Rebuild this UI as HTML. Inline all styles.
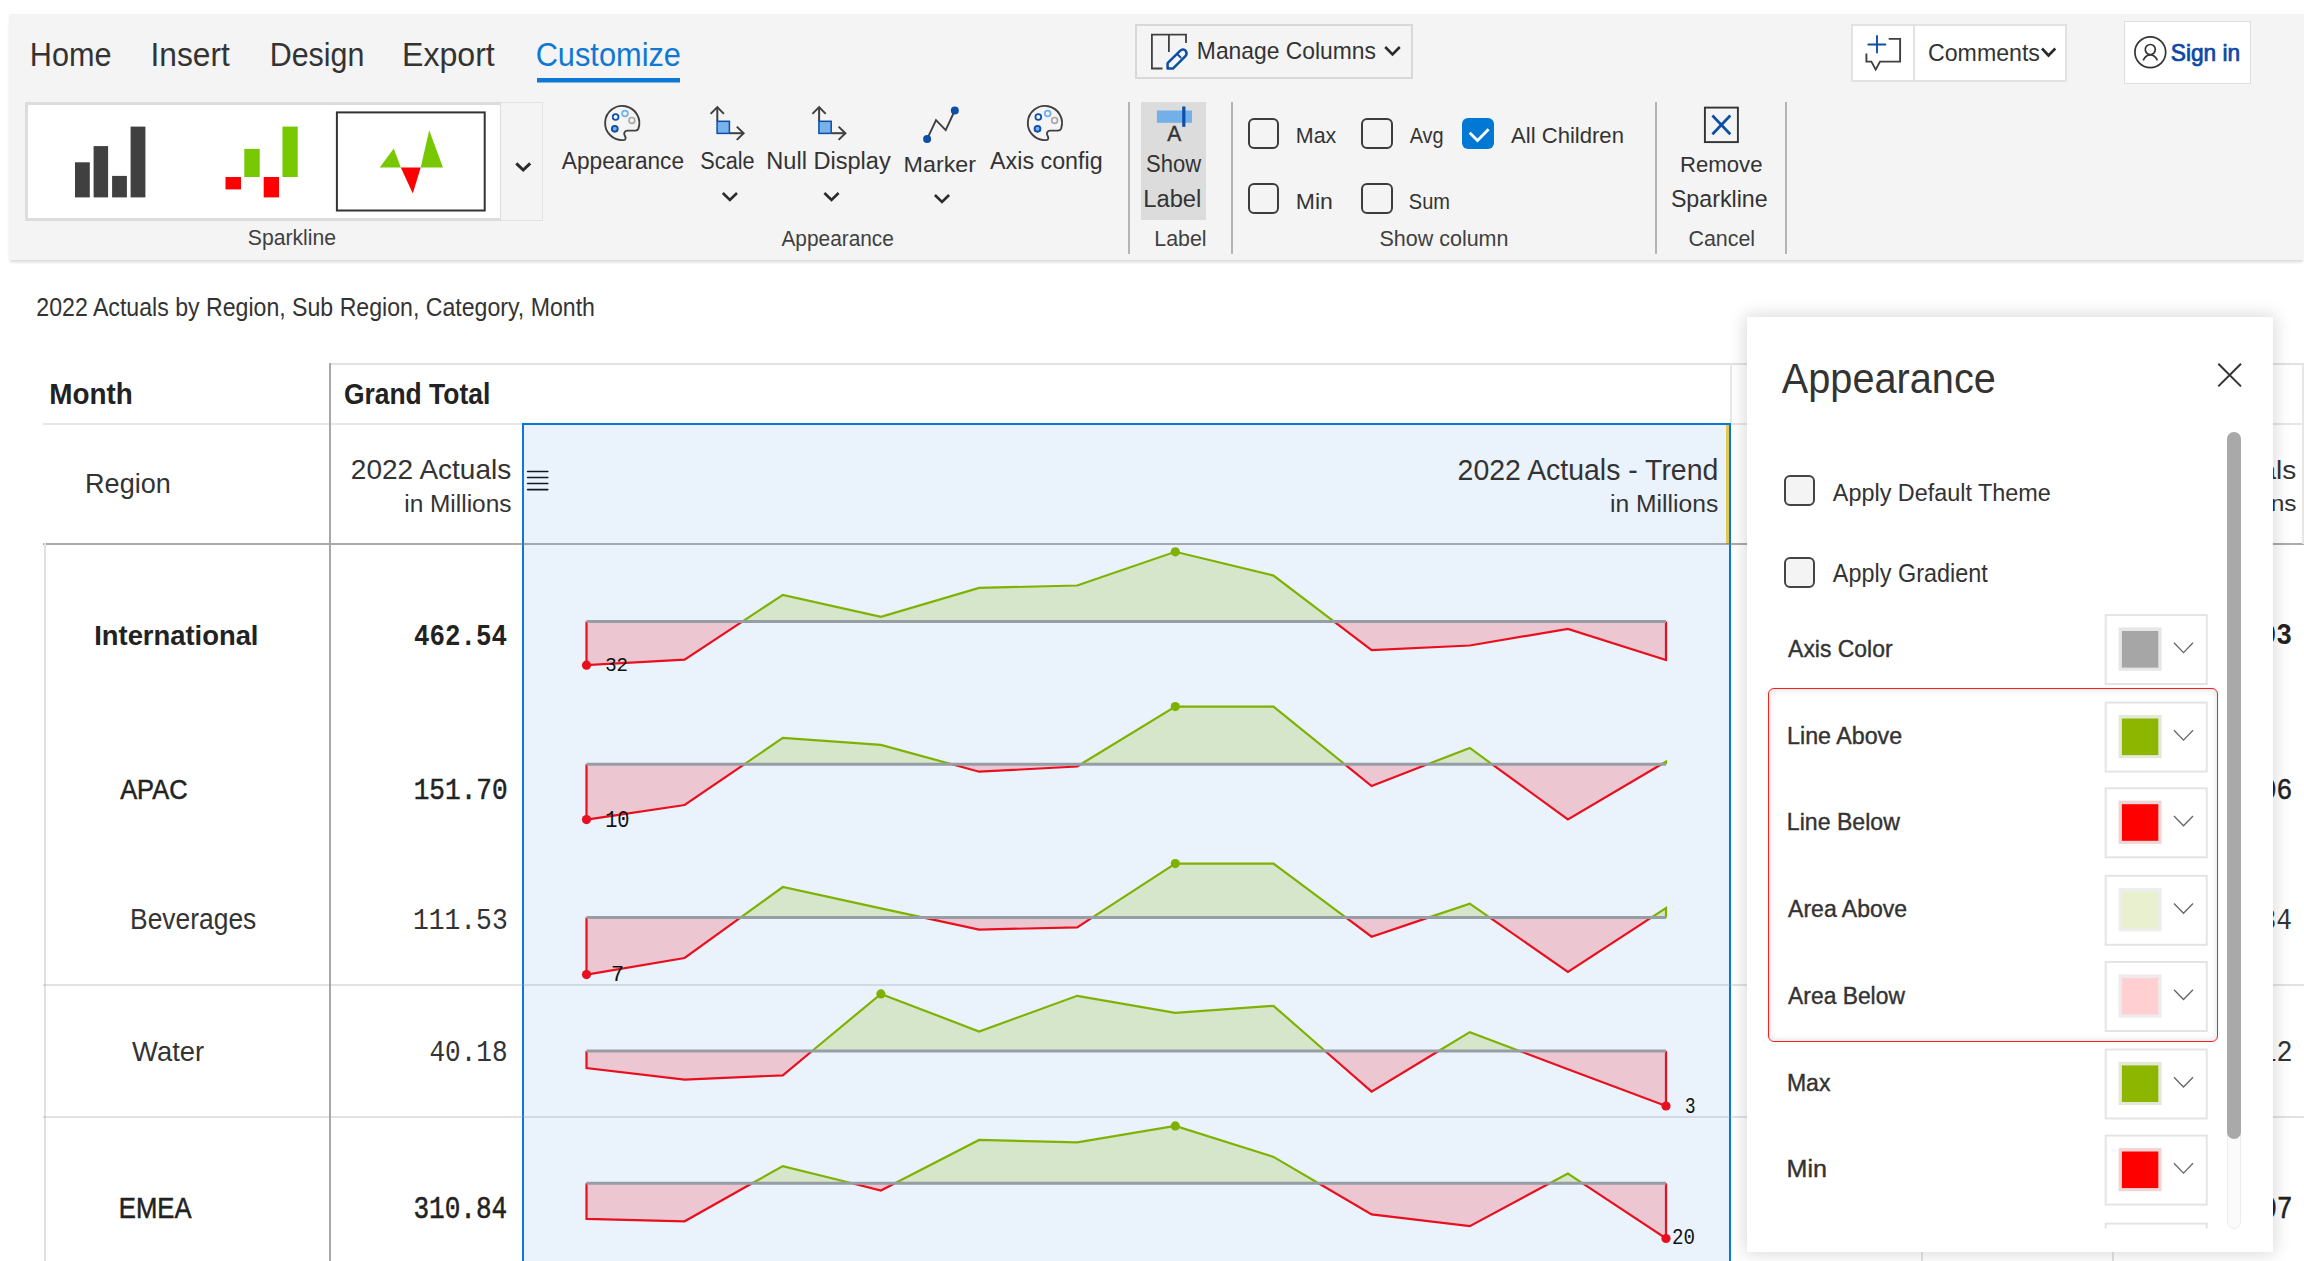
<!DOCTYPE html>
<html><head><meta charset="utf-8">
<style>
html,body{margin:0;padding:0;background:#fff;}
body{width:2304px;height:1261px;position:relative;overflow:hidden;font-family:"Liberation Sans",sans-serif;}
.a{position:absolute;box-sizing:border-box;}
svg.full{position:absolute;left:0;top:0;width:2304px;height:1261px;overflow:visible;}
</style></head><body>
<!-- ribbon -->
<div class="a" style="left:9px;top:14px;width:2295px;height:246px;background:#f4f4f4;box-shadow:0 3px 3px -1px rgba(0,0,0,0.16);"></div>
<!-- gallery -->
<div class="a" style="left:25px;top:102px;width:478px;height:119px;background:#fff;border:3px solid #dcdcdc;"></div>
<div class="a" style="left:501px;top:102px;width:42px;height:119px;background:#f4f4f4;border:1px solid #e2e2e2;border-left:none;"></div>
<!-- show label highlight -->
<div class="a" style="left:1141px;top:102px;width:65px;height:118px;background:#dcdcdc;"></div>
<!-- top buttons -->
<div class="a" style="left:1135px;top:24px;width:278px;height:55px;border:2px solid #d8d8d8;"></div>
<div class="a" style="left:1851px;top:24px;width:216px;height:58px;background:#fff;border:2px solid #e2e2e2;"></div>
<div class="a" style="left:1912.5px;top:25px;width:2px;height:56px;background:#e2e2e2;"></div>
<div class="a" style="left:2124px;top:21px;width:126.5px;height:63px;background:#fff;border:1.5px solid #dedede;"></div>
<!-- separators -->
<div class="a" style="left:1128px;top:102px;width:2px;height:152px;background:#b4b4b4;"></div>
<div class="a" style="left:1230.5px;top:102px;width:2px;height:152px;background:#b4b4b4;"></div>
<div class="a" style="left:1654.5px;top:102px;width:2px;height:152px;background:#b4b4b4;"></div>
<div class="a" style="left:1785px;top:102px;width:2px;height:152px;background:#b4b4b4;"></div>
<!-- checkboxes -->
<div class="a" style="left:1248px;top:118.4px;width:31.4px;height:30.6px;border:2px solid #3c3c3c;border-radius:6px;"></div>
<div class="a" style="left:1361.4px;top:118.4px;width:31.4px;height:30.6px;border:2px solid #3c3c3c;border-radius:6px;"></div>
<div class="a" style="left:1248px;top:183.3px;width:31.4px;height:31.2px;border:2px solid #3c3c3c;border-radius:6px;"></div>
<div class="a" style="left:1361.4px;top:183.3px;width:31.4px;height:31.2px;border:2px solid #3c3c3c;border-radius:6px;"></div>
<div class="a" style="left:1461.5px;top:117.8px;width:32px;height:31.7px;background:#0078d4;border-radius:6px;"></div>

<svg class="full">
<!-- tab underline -->
<rect x="537" y="78" width="143" height="4.5" fill="#0f78d4"/>
<!-- gallery icons -->
<g fill="#404040"><rect x="75" y="162.3" width="14.8" height="35.1"/><rect x="93.6" y="146.1" width="14.5" height="51.3"/><rect x="112.1" y="175.9" width="14.8" height="21.5"/><rect x="130.6" y="126.6" width="14.8" height="70.8"/></g>
<g><rect x="225.5" y="177" width="15.5" height="12.4" fill="#ff0000"/><rect x="244.3" y="148.9" width="15.4" height="28.1" fill="#77c800"/><rect x="263.7" y="177" width="15.3" height="20.4" fill="#ff0000"/><rect x="282.5" y="126.6" width="15.2" height="50.4" fill="#77c800"/></g>
<rect x="336.9" y="112.4" width="147.8" height="98.1" fill="none" stroke="#333" stroke-width="2"/>
<polygon points="379.7,167.6 393.8,148.4 400.8,167.6" fill="#77c800"/>
<polygon points="400.8,167.6 420.7,167.6 412.8,193.4" fill="#ff0000"/>
<polygon points="420.7,167.6 429.2,130.2 443,167.6" fill="#77c800"/>
<polyline points="516.3,163.3 523.2,170 530.2,163.3" fill="none" stroke="#2b2b2b" stroke-width="3"/>
<!-- palette icons -->
<g id="pal">
<path d="M623.6,140.1 A17.1 17.1 0 1 1 638.4,128.6 Q637.6,130.6 635.2,130.6 L627.5,130.6 C624.6,130.6 623.3,133.6 624.8,135.6 C626.2,137.6 625.8,140.1 623.6,140.1 Z" fill="none" stroke="#404040" stroke-width="1.9" stroke-linejoin="round"/>
<circle cx="615.6" cy="117" r="2.9" fill="none" stroke="#0d4ea6" stroke-width="1.7"/>
<circle cx="625" cy="113.5" r="2.9" fill="none" stroke="#6fb0ee" stroke-width="1.7"/>
<circle cx="631.9" cy="120.4" r="2.9" fill="none" stroke="#a8a8a8" stroke-width="1.7"/>
<circle cx="614.8" cy="128.8" r="2.9" fill="#74b3ee" stroke="#0d4ea6" stroke-width="1.9"/>
</g>
<use href="#pal" x="422.7" y="0"/>
<!-- scale icon -->
<g id="scl" fill="none" stroke="#404040" stroke-width="2">
<polyline points="710.6,113.9 717.3,107.1 723.9,113.9"/><line x1="717.3" y1="107.5" x2="717.3" y2="121"/>
<polyline points="736.8,126.6 743.6,133.2 736.8,139.9"/><line x1="730" y1="133.2" x2="743" y2="133.2"/>
<rect x="717.1" y="121.3" width="12.3" height="12.1" fill="#78b2ea" stroke="#0d4ea6" stroke-width="1.5"/>
</g>
<use href="#scl" x="101.8" y="0"/>
<!-- chevrons under buttons -->
<g fill="none" stroke="#2b2b2b" stroke-width="2.6">
<polyline points="722.8,193 729.9,200 737,193"/>
<polyline points="824.4,193 831.5,200 838.6,193"/>
<polyline points="934.9,195 942,202 949.1,195"/>
<polyline points="1385.2,47 1392.5,54.3 1399.8,47"/>
<polyline points="2042,48.5 2048.5,55.5 2055.3,48.5"/>
</g>
<!-- marker icon -->
<polyline points="927.1,139.1 936,120.2 945.7,130.1 954.8,110.5" fill="none" stroke="#404040" stroke-width="1.9"/>
<circle cx="927.1" cy="139.1" r="4" fill="#0d4ea6"/><circle cx="954.8" cy="110.5" r="4" fill="#0d4ea6"/>
<!-- show label icon -->
<rect x="1156.9" y="110.5" width="35.1" height="12.3" fill="#74b0e8"/>
<rect x="1182.2" y="106.5" width="3.2" height="20.3" fill="#0d4ea6"/>
<text transform="translate(1167.3,141.3) scale(0.93,1)" font-family="Liberation Sans" font-size="22.6" fill="#333" stroke="#333" stroke-width="0.4">A</text>
<!-- remove icon -->
<rect x="1704.9" y="107.6" width="33" height="34.5" fill="none" stroke="#333" stroke-width="1.9"/>
<g stroke="#0d4ea6" stroke-width="2.7"><line x1="1712.4" y1="115.5" x2="1730.3" y2="134.3"/><line x1="1730.3" y1="115.5" x2="1712.4" y2="134.3"/></g>
<!-- checkmark -->
<polyline points="1469.7,132.8 1477.5,140.6 1488.6,129.2" fill="none" stroke="#fff" stroke-width="2.8"/>
<!-- manage columns icon -->
<polyline points="1162.5,68.5 1151.9,68.5 1151.9,34.7 1186,34.7 1186,43" fill="none" stroke="#404040" stroke-width="1.8"/>
<line x1="1168.9" y1="34.7" x2="1168.9" y2="52" stroke="#404040" stroke-width="1.8"/>
<path d="M1167.6,68.6 L1167.6,63.2 L1180,50.8 C1182,48.8 1184.8,49 1186,51.3 C1187,53.3 1186.6,55 1185.2,56.4 L1172.9,68.6 Z" fill="none" stroke="#0d4ea6" stroke-width="2.5" stroke-linejoin="round"/>
<line x1="1177.2" y1="54" x2="1181.2" y2="58" stroke="#0d4ea6" stroke-width="1.8"/>
<!-- comments icon -->
<g fill="none" stroke="#0d4ea6" stroke-width="1.9" stroke-linecap="round"><line x1="1877" y1="36" x2="1877" y2="52.6"/><line x1="1868.3" y1="44.5" x2="1885.4" y2="44.5"/></g>
<polyline points="1866.4,53.4 1866.4,61.6 1871.4,61.6 1875.7,69.6 1880,61.6 1900.1,61.6 1900.1,38.9 1888.7,38.9" fill="none" stroke="#404040" stroke-width="1.9"/>
<!-- sign in icon -->
<g fill="none" stroke="#333" stroke-width="1.7"><circle cx="2150.3" cy="52.3" r="15.4"/><circle cx="2150.3" cy="49.5" r="5"/><path d="M2143.2,60.3 C2145,56.5 2147.5,54.8 2150.3,54.8 C2153.1,54.8 2155.6,56.5 2157.4,60.3"/></g>
<text transform="translate(29.79,65.70) scale(0.9005,1)" font-family="Liberation Sans" font-size="34.01" font-weight="400" fill="#333333">Home</text>
<text transform="translate(150.52,65.70) scale(0.9405,1)" font-family="Liberation Sans" font-size="33.72" font-weight="400" fill="#333333">Insert</text>
<text transform="translate(269.72,65.70) scale(0.9018,1)" font-family="Liberation Sans" font-size="33.72" font-weight="400" fill="#333333">Design</text>
<text transform="translate(402.01,65.70) scale(0.9522,1)" font-family="Liberation Sans" font-size="33.72" font-weight="400" fill="#333333">Export</text>
<text transform="translate(535.64,65.70) scale(0.9131,1)" font-family="Liberation Sans" font-size="33.72" font-weight="400" fill="#0f78d4">Customize</text>
<text transform="translate(1196.85,58.60) scale(0.9587,1)" font-family="Liberation Sans" font-size="23.84" font-weight="400" fill="#333333">Manage Columns</text>
<text transform="translate(1928.02,60.60) scale(0.9599,1)" font-family="Liberation Sans" font-size="24.13" font-weight="400" fill="#333333">Comments</text>
<text transform="translate(2170.79,60.83) scale(0.9727,1)" font-family="Liberation Sans" font-size="23.33" font-weight="400" fill="#0b48a8" stroke="#0b48a8" stroke-width="0.75">Sign in</text>
<text transform="translate(561.84,168.70) scale(0.9572,1)" font-family="Liberation Sans" font-size="23.69" font-weight="400" fill="#333333">Appearance</text>
<text transform="translate(700.33,168.70) scale(0.9170,1)" font-family="Liberation Sans" font-size="23.69" font-weight="400" fill="#333333">Scale</text>
<text transform="translate(766.27,168.70) scale(0.9964,1)" font-family="Liberation Sans" font-size="23.69" font-weight="400" fill="#333333">Null Display</text>
<text transform="translate(903.60,172.20) scale(1.0472,1)" font-family="Liberation Sans" font-size="22.24" font-weight="400" fill="#333333">Marker</text>
<text transform="translate(990.09,168.70) scale(0.9830,1)" font-family="Liberation Sans" font-size="23.69" font-weight="400" fill="#333333">Axis config</text>
<text transform="translate(1145.98,172.30) scale(0.9318,1)" font-family="Liberation Sans" font-size="23.69" font-weight="400" fill="#333333">Show</text>
<text transform="translate(1143.25,207.20) scale(0.9667,1)" font-family="Liberation Sans" font-size="24.56" font-weight="400" fill="#333333">Label</text>
<text transform="translate(1295.79,143.40) scale(0.9961,1)" font-family="Liberation Sans" font-size="21.51" font-weight="400" fill="#333333">Max</text>
<text transform="translate(1409.64,143.40) scale(0.9266,1)" font-family="Liberation Sans" font-size="21.51" font-weight="400" fill="#333333">Avg</text>
<text transform="translate(1511.09,143.40) scale(1.0266,1)" font-family="Liberation Sans" font-size="21.51" font-weight="400" fill="#333333">All Children</text>
<text transform="translate(1295.72,209.00) scale(1.0487,1)" font-family="Liberation Sans" font-size="21.95" font-weight="400" fill="#333333">Min</text>
<text transform="translate(1408.84,209.00) scale(0.9142,1)" font-family="Liberation Sans" font-size="21.95" font-weight="400" fill="#333333">Sum</text>
<text transform="translate(1680.06,171.90) scale(0.9726,1)" font-family="Liberation Sans" font-size="22.75" font-weight="400" fill="#333333">Remove</text>
<text transform="translate(1670.88,206.70) scale(0.9743,1)" font-family="Liberation Sans" font-size="23.84" font-weight="400" fill="#333333">Sparkline</text>
<text transform="translate(247.76,245.40) scale(0.9789,1)" font-family="Liberation Sans" font-size="21.66" font-weight="400" fill="#404040">Sparkline</text>
<text transform="translate(781.45,245.90) scale(0.9382,1)" font-family="Liberation Sans" font-size="22.24" font-weight="400" fill="#404040">Appearance</text>
<text transform="translate(1154.23,245.80) scale(0.9443,1)" font-family="Liberation Sans" font-size="22.67" font-weight="400" fill="#404040">Label</text>
<text transform="translate(1379.45,245.80) scale(0.9489,1)" font-family="Liberation Sans" font-size="22.67" font-weight="400" fill="#404040">Show column</text>
<text transform="translate(1688.44,245.80) scale(0.9456,1)" font-family="Liberation Sans" font-size="22.67" font-weight="400" fill="#404040">Cancel</text>
</svg>

<!-- table -->
<div class="a" style="left:329px;top:363px;width:1975px;height:2px;background:#e2e2e2;"></div>
<div class="a" style="left:43px;top:422.5px;width:2261px;height:2px;background:#e6e6e6;"></div>
<div class="a" style="left:1729.5px;top:363px;width:2px;height:60px;background:#e8e8e8;"></div>
<div class="a" style="left:522px;top:423px;width:1209px;height:840px;background:#eaf2fc;border:2.5px solid #0a78d7;border-bottom:none;"></div>
<div class="a" style="left:1725.5px;top:424.5px;width:3.5px;height:119px;background:#e2c850;"></div>
<div class="a" style="left:43px;top:542.8px;width:2261px;height:2px;background:rgba(120,120,125,0.62);"></div>
<div class="a" style="left:328.5px;top:363px;width:2px;height:898px;background:#a8a8a8;"></div>
<div class="a" style="left:43.5px;top:543px;width:2px;height:718px;background:#e0e0e0;"></div>
<div class="a" style="left:43px;top:984.3px;width:2261px;height:2px;background:rgba(150,150,160,0.28);"></div>
<div class="a" style="left:43px;top:1116.3px;width:2261px;height:2px;background:rgba(150,150,160,0.28);"></div>
<div class="a" style="left:2301.5px;top:363px;width:2px;height:181px;background:#e6e6e6;"></div>
<div class="a" style="left:1921px;top:544px;width:2px;height:717px;background:#e2e2e2;"></div>
<div class="a" style="left:2112px;top:544px;width:2px;height:717px;background:#e2e2e2;"></div>
<svg class="full">
<g stroke="#101820" stroke-width="1.6" stroke-linecap="round"><line x1="527.6" y1="471.5" x2="547.8" y2="471.5"/><line x1="527.6" y1="477.5" x2="547.8" y2="477.5"/><line x1="527.6" y1="483.5" x2="547.8" y2="483.5"/><line x1="527.6" y1="489.6" x2="547.8" y2="489.6"/></g>
<polygon points="586.5,621.4 586.5,621.4 684.6,621.4 742.6,621.4 782.8,594.9 880.9,616.8 979.1,587.9 1077.2,585.5 1175.3,551.8 1273.5,575.6 1333.8,621.4 1371.6,621.4 1469.8,621.4 1567.9,621.4 1666.0,621.4 1666.0,621.4" fill="#d6e6cb"/>
<polygon points="586.5,621.4 586.5,665.2 684.6,659.6 742.6,621.4 782.8,621.4 880.9,621.4 979.1,621.4 1077.2,621.4 1175.3,621.4 1273.5,621.4 1333.8,621.4 1371.6,650.1 1469.8,645.5 1567.9,628.9 1666.0,660.1 1666.0,621.4" fill="#ecc7d1"/>
<polyline points="586.5,621.4 586.5,665.2 684.6,659.6 742.6,621.4" fill="none" stroke="#e8101e" stroke-width="2.2" stroke-linejoin="miter"/>
<polyline points="742.6,621.4 782.8,594.9 880.9,616.8 979.1,587.9 1077.2,585.5 1175.3,551.8 1273.5,575.6 1333.8,621.4" fill="none" stroke="#7fb200" stroke-width="2.2" stroke-linejoin="miter"/>
<polyline points="1333.8,621.4 1371.6,650.1 1469.8,645.5 1567.9,628.9 1666.0,660.1 1666.0,621.4" fill="none" stroke="#e8101e" stroke-width="2.2" stroke-linejoin="miter"/>
<line x1="586.5" y1="621.4" x2="1666.0" y2="621.4" stroke="#979da5" stroke-width="3"/>
<circle cx="1175.3" cy="551.8" r="4.6" fill="#7fb200"/>
<circle cx="586.5" cy="665.2" r="4.6" fill="#e8101e"/>
<polygon points="586.5,764.3 586.5,764.3 684.6,764.3 744.2,764.3 782.8,737.9 880.9,744.9 952.0,764.3 979.1,764.3 1077.2,764.3 1080.8,764.3 1175.3,706.6 1273.5,706.6 1344.8,764.3 1371.6,764.3 1427.5,764.3 1469.8,747.9 1492.2,764.3 1567.9,764.3 1661.5,764.3 1666.0,761.6 1666.0,764.3" fill="#d6e6cb"/>
<polygon points="586.5,764.3 586.5,819.6 684.6,805.0 744.2,764.3 782.8,764.3 880.9,764.3 952.0,764.3 979.1,771.7 1077.2,766.5 1080.8,764.3 1175.3,764.3 1273.5,764.3 1344.8,764.3 1371.6,786.0 1427.5,764.3 1469.8,764.3 1492.2,764.3 1567.9,819.5 1661.5,764.3 1666.0,764.3 1666.0,764.3" fill="#ecc7d1"/>
<polyline points="586.5,764.3 586.5,819.6 684.6,805.0 744.2,764.3" fill="none" stroke="#e8101e" stroke-width="2.2" stroke-linejoin="miter"/>
<polyline points="744.2,764.3 782.8,737.9 880.9,744.9 952.0,764.3" fill="none" stroke="#7fb200" stroke-width="2.2" stroke-linejoin="miter"/>
<polyline points="952.0,764.3 979.1,771.7 1077.2,766.5 1080.8,764.3" fill="none" stroke="#e8101e" stroke-width="2.2" stroke-linejoin="miter"/>
<polyline points="1080.8,764.3 1175.3,706.6 1273.5,706.6 1344.8,764.3" fill="none" stroke="#7fb200" stroke-width="2.2" stroke-linejoin="miter"/>
<polyline points="1344.8,764.3 1371.6,786.0 1427.5,764.3" fill="none" stroke="#e8101e" stroke-width="2.2" stroke-linejoin="miter"/>
<polyline points="1427.5,764.3 1469.8,747.9 1492.2,764.3" fill="none" stroke="#7fb200" stroke-width="2.2" stroke-linejoin="miter"/>
<polyline points="1492.2,764.3 1567.9,819.5 1661.5,764.3" fill="none" stroke="#e8101e" stroke-width="2.2" stroke-linejoin="miter"/>
<polyline points="1661.5,764.3 1666.0,761.6 1666.0,764.3" fill="none" stroke="#7fb200" stroke-width="2.2" stroke-linejoin="miter"/>
<line x1="586.5" y1="764.3" x2="1666.0" y2="764.3" stroke="#979da5" stroke-width="3"/>
<circle cx="1175.3" cy="706.6" r="4.6" fill="#7fb200"/>
<circle cx="586.5" cy="819.6" r="4.6" fill="#e8101e"/>
<polygon points="586.5,917.4 586.5,917.4 684.6,917.4 740.8,917.4 782.8,887.0 880.9,908.4 922.6,917.4 979.1,917.4 1077.2,917.4 1092.5,917.4 1175.3,863.6 1273.5,863.6 1345.7,917.4 1371.6,917.4 1429.0,917.4 1469.8,903.7 1489.5,917.4 1567.9,917.4 1651.6,917.4 1666.0,908.0 1666.0,917.4" fill="#d6e6cb"/>
<polygon points="586.5,917.4 586.5,974.6 684.6,958.0 740.8,917.4 782.8,917.4 880.9,917.4 922.6,917.4 979.1,929.6 1077.2,927.3 1092.5,917.4 1175.3,917.4 1273.5,917.4 1345.7,917.4 1371.6,936.7 1429.0,917.4 1469.8,917.4 1489.5,917.4 1567.9,971.9 1651.6,917.4 1666.0,917.4 1666.0,917.4" fill="#ecc7d1"/>
<polyline points="586.5,917.4 586.5,974.6 684.6,958.0 740.8,917.4" fill="none" stroke="#e8101e" stroke-width="2.2" stroke-linejoin="miter"/>
<polyline points="740.8,917.4 782.8,887.0 880.9,908.4 922.6,917.4" fill="none" stroke="#7fb200" stroke-width="2.2" stroke-linejoin="miter"/>
<polyline points="922.6,917.4 979.1,929.6 1077.2,927.3 1092.5,917.4" fill="none" stroke="#e8101e" stroke-width="2.2" stroke-linejoin="miter"/>
<polyline points="1092.5,917.4 1175.3,863.6 1273.5,863.6 1345.7,917.4" fill="none" stroke="#7fb200" stroke-width="2.2" stroke-linejoin="miter"/>
<polyline points="1345.7,917.4 1371.6,936.7 1429.0,917.4" fill="none" stroke="#e8101e" stroke-width="2.2" stroke-linejoin="miter"/>
<polyline points="1429.0,917.4 1469.8,903.7 1489.5,917.4" fill="none" stroke="#7fb200" stroke-width="2.2" stroke-linejoin="miter"/>
<polyline points="1489.5,917.4 1567.9,971.9 1651.6,917.4" fill="none" stroke="#e8101e" stroke-width="2.2" stroke-linejoin="miter"/>
<polyline points="1651.6,917.4 1666.0,908.0 1666.0,917.4" fill="none" stroke="#7fb200" stroke-width="2.2" stroke-linejoin="miter"/>
<line x1="586.5" y1="917.4" x2="1666.0" y2="917.4" stroke="#979da5" stroke-width="3"/>
<circle cx="1175.3" cy="863.6" r="4.6" fill="#7fb200"/>
<circle cx="586.5" cy="974.6" r="4.6" fill="#e8101e"/>
<polygon points="586.5,1051.0 586.5,1051.0 684.6,1051.0 782.8,1051.0 812.1,1051.0 880.9,993.9 979.1,1031.5 1077.2,995.8 1175.3,1012.9 1273.5,1005.8 1325.1,1051.0 1371.6,1051.0 1438.6,1051.0 1469.8,1032.1 1519.6,1051.0 1567.9,1051.0 1666.0,1051.0 1666.0,1051.0" fill="#d6e6cb"/>
<polygon points="586.5,1051.0 586.5,1068.0 684.6,1079.7 782.8,1075.3 812.1,1051.0 880.9,1051.0 979.1,1051.0 1077.2,1051.0 1175.3,1051.0 1273.5,1051.0 1325.1,1051.0 1371.6,1091.7 1438.6,1051.0 1469.8,1051.0 1519.6,1051.0 1567.9,1069.3 1666.0,1106.0 1666.0,1051.0" fill="#ecc7d1"/>
<polyline points="586.5,1051.0 586.5,1068.0 684.6,1079.7 782.8,1075.3 812.1,1051.0" fill="none" stroke="#e8101e" stroke-width="2.2" stroke-linejoin="miter"/>
<polyline points="812.1,1051.0 880.9,993.9 979.1,1031.5 1077.2,995.8 1175.3,1012.9 1273.5,1005.8 1325.1,1051.0" fill="none" stroke="#7fb200" stroke-width="2.2" stroke-linejoin="miter"/>
<polyline points="1325.1,1051.0 1371.6,1091.7 1438.6,1051.0" fill="none" stroke="#e8101e" stroke-width="2.2" stroke-linejoin="miter"/>
<polyline points="1438.6,1051.0 1469.8,1032.1 1519.6,1051.0" fill="none" stroke="#7fb200" stroke-width="2.2" stroke-linejoin="miter"/>
<polyline points="1519.6,1051.0 1567.9,1069.3 1666.0,1106.0 1666.0,1051.0" fill="none" stroke="#e8101e" stroke-width="2.2" stroke-linejoin="miter"/>
<line x1="586.5" y1="1051.0" x2="1666.0" y2="1051.0" stroke="#979da5" stroke-width="3"/>
<circle cx="880.9" cy="993.9" r="4.6" fill="#7fb200"/>
<circle cx="1666.0" cy="1106.0" r="4.6" fill="#e8101e"/>
<polygon points="586.5,1183.3 586.5,1183.3 684.6,1183.3 752.2,1183.3 782.8,1166.1 852.0,1183.3 880.9,1183.3 894.9,1183.3 979.1,1139.9 1077.2,1142.4 1175.3,1125.9 1273.5,1156.9 1318.5,1183.3 1371.6,1183.3 1469.8,1183.3 1549.7,1183.3 1567.9,1173.5 1582.7,1183.3 1666.0,1183.3 1666.0,1183.3" fill="#d6e6cb"/>
<polygon points="586.5,1183.3 586.5,1218.9 684.6,1221.3 752.2,1183.3 782.8,1183.3 852.0,1183.3 880.9,1190.5 894.9,1183.3 979.1,1183.3 1077.2,1183.3 1175.3,1183.3 1273.5,1183.3 1318.5,1183.3 1371.6,1214.4 1469.8,1226.2 1549.7,1183.3 1567.9,1183.3 1582.7,1183.3 1666.0,1238.5 1666.0,1183.3" fill="#ecc7d1"/>
<polyline points="586.5,1183.3 586.5,1218.9 684.6,1221.3 752.2,1183.3" fill="none" stroke="#e8101e" stroke-width="2.2" stroke-linejoin="miter"/>
<polyline points="752.2,1183.3 782.8,1166.1 852.0,1183.3" fill="none" stroke="#7fb200" stroke-width="2.2" stroke-linejoin="miter"/>
<polyline points="852.0,1183.3 880.9,1190.5 894.9,1183.3" fill="none" stroke="#e8101e" stroke-width="2.2" stroke-linejoin="miter"/>
<polyline points="894.9,1183.3 979.1,1139.9 1077.2,1142.4 1175.3,1125.9 1273.5,1156.9 1318.5,1183.3" fill="none" stroke="#7fb200" stroke-width="2.2" stroke-linejoin="miter"/>
<polyline points="1318.5,1183.3 1371.6,1214.4 1469.8,1226.2 1549.7,1183.3" fill="none" stroke="#e8101e" stroke-width="2.2" stroke-linejoin="miter"/>
<polyline points="1549.7,1183.3 1567.9,1173.5 1582.7,1183.3" fill="none" stroke="#7fb200" stroke-width="2.2" stroke-linejoin="miter"/>
<polyline points="1582.7,1183.3 1666.0,1238.5 1666.0,1183.3" fill="none" stroke="#e8101e" stroke-width="2.2" stroke-linejoin="miter"/>
<line x1="586.5" y1="1183.3" x2="1666.0" y2="1183.3" stroke="#979da5" stroke-width="3"/>
<circle cx="1175.3" cy="1125.9" r="4.6" fill="#7fb200"/>
<circle cx="1666.0" cy="1238.5" r="4.6" fill="#e8101e"/>
<text transform="translate(36.32,316.40) scale(0.8887,1)" font-family="Liberation Sans" font-size="26.02" font-weight="400" fill="#333333">2022 Actuals by Region, Sub Region, Category, Month</text>
<text transform="translate(49.25,403.80) scale(0.9567,1)" font-family="Liberation Sans" font-size="29.14" font-weight="700" fill="#222222">Month</text>
<text transform="translate(343.94,403.80) scale(0.9072,1)" font-family="Liberation Sans" font-size="29.14" font-weight="700" fill="#222222">Grand Total</text>
<text transform="translate(85.05,493.00) scale(0.9555,1)" font-family="Liberation Sans" font-size="28.34" font-weight="400" fill="#333333">Region</text>
<text transform="translate(350.84,479.20) scale(0.9887,1)" font-family="Liberation Sans" font-size="28.34" font-weight="400" fill="#333333">2022 Actuals</text>
<text transform="translate(404.23,511.90) scale(1.0446,1)" font-family="Liberation Sans" font-size="23.40" font-weight="400" fill="#333333">in Millions</text>
<text transform="translate(1457.60,480.20) scale(0.9360,1)" font-family="Liberation Sans" font-size="30.38" font-weight="400" fill="#333333">2022 Actuals - Trend</text>
<text transform="translate(1609.95,512.30) scale(1.0047,1)" font-family="Liberation Sans" font-size="24.56" font-weight="400" fill="#333333">in Millions</text>
<text transform="translate(94.18,644.60) scale(0.9613,1)" font-family="Liberation Sans" font-size="28.49" font-weight="700" fill="#222222">International</text>
<text transform="translate(413.98,644.60) scale(0.8698,1)" font-family="Liberation Mono" font-size="29.74" font-weight="700" fill="#222222">462.54</text>
<text transform="translate(120.13,798.55) scale(0.9175,1)" font-family="Liberation Sans" font-size="27.76" font-weight="400" fill="#222222" stroke="#222222" stroke-width="0.5">APAC</text>
<text transform="translate(413.72,798.55) scale(0.8905,1)" font-family="Liberation Mono" font-size="29.29" font-weight="400" fill="#222222" stroke="#222222" stroke-width="0.5">151.70</text>
<text transform="translate(130.02,929.20) scale(0.9090,1)" font-family="Liberation Sans" font-size="29.07" font-weight="400" fill="#333333">Beverages</text>
<text transform="translate(412.88,929.20) scale(0.8682,1)" font-family="Liberation Mono" font-size="30.35" font-weight="400" fill="#333333">111.53</text>
<text transform="translate(132.11,1061.40) scale(0.9613,1)" font-family="Liberation Sans" font-size="28.49" font-weight="400" fill="#333333">Water</text>
<text transform="translate(429.50,1061.40) scale(0.8755,1)" font-family="Liberation Mono" font-size="29.74" font-weight="400" fill="#333333">40.18</text>
<text transform="translate(118.86,1218.25) scale(0.8650,1)" font-family="Liberation Sans" font-size="29.65" font-weight="400" fill="#222222" stroke="#222222" stroke-width="0.5">EMEA</text>
<text transform="translate(413.40,1218.25) scale(0.8424,1)" font-family="Liberation Mono" font-size="30.96" font-weight="400" fill="#222222" stroke="#222222" stroke-width="0.5">310.84</text>
<text transform="translate(605.15,671.30) scale(0.9457,1)" font-family="Liberation Mono" font-size="20.18" font-weight="400" fill="#111111">32</text>
<text transform="translate(605.15,827.30) scale(0.8460,1)" font-family="Liberation Mono" font-size="23.98" font-weight="400" fill="#111111">10</text>
<text transform="translate(611.00,981.10) scale(0.9466,1)" font-family="Liberation Mono" font-size="22.91" font-weight="400" fill="#111111">7</text>
<text transform="translate(1685.04,1113.20) scale(0.8096,1)" font-family="Liberation Mono" font-size="21.70" font-weight="400" fill="#111111">3</text>
<text transform="translate(1671.94,1244.00) scale(0.8954,1)" font-family="Liberation Mono" font-size="21.40" font-weight="400" fill="#111111">20</text>
<text transform="translate(2135.84,479.20) scale(1.1017,1)" font-family="Liberation Sans" font-size="25.44" font-weight="400" fill="#333333">2022 Actuals</text>
<text transform="translate(2189.23,511.00) scale(1.1065,1)" font-family="Liberation Sans" font-size="22.09" font-weight="400" fill="#333333">in Millions</text>
<text transform="translate(2197.51,644.00) scale(0.9094,1)" font-family="Liberation Mono" font-size="28.83" font-weight="700" fill="#222222">148.03</text>
<text transform="translate(2197.42,798.55) scale(0.9000,1)" font-family="Liberation Mono" font-size="29.29" font-weight="400" fill="#222222" stroke="#222222" stroke-width="0.5">116.06</text>
<text transform="translate(2197.43,929.20) scale(0.8645,1)" font-family="Liberation Mono" font-size="30.35" font-weight="400" fill="#333333">108.34</text>
<text transform="translate(2228.36,1061.40) scale(0.9003,1)" font-family="Liberation Mono" font-size="29.74" font-weight="400" fill="#333333">7.12</text>
<text transform="translate(2197.42,1218.25) scale(0.8555,1)" font-family="Liberation Mono" font-size="30.96" font-weight="400" fill="#222222" stroke="#222222" stroke-width="0.5">227.07</text>
</svg>

<!-- panel -->
<div class="a" style="left:1747px;top:317px;width:526px;height:934.5px;background:#fff;box-shadow:0 0 16px 2px rgba(0,0,0,0.15);"></div>
<div class="a" style="left:1784.4px;top:475.4px;width:31px;height:31px;border:2px solid #444;border-radius:6px;background:#f4f4f4;"></div>
<div class="a" style="left:1784.4px;top:557px;width:31px;height:30.5px;border:2px solid #444;border-radius:6px;background:#f4f4f4;"></div>
<div class="a" style="left:2226.8px;top:431.7px;width:14.5px;height:797px;border-radius:7px;background:#fbfbfb;border:1px solid #ececec;"></div>
<div class="a" style="left:2226.8px;top:431.7px;width:14.5px;height:707px;border-radius:7px;background:#a9a9a9;"></div>
<div class="a" style="left:1768.4px;top:688.3px;width:450px;height:353.7px;border:1.9px solid #ff1c1c;border-radius:6px;box-shadow:inset 0 0 7px rgba(0,0,0,0.13),0 0 4px rgba(0,0,0,0.06);"></div>
<svg class="full">
<defs><clipPath id="pclip"><rect x="1747" y="300" width="560" height="928.4"/></clipPath></defs>
<g stroke="#333" stroke-width="2"><line x1="2218.3" y1="363.8" x2="2241" y2="386.4"/><line x1="2241" y1="363.8" x2="2218.3" y2="386.4"/></g>
<g clip-path="url(#pclip)" id="pick">
<rect x="2105.7" y="615.1" width="101" height="69" fill="#fff" stroke="#e4e4e4" stroke-width="2"/>
<rect x="2118.6" y="627.4" width="43" height="43.3" fill="rgb(230,230,230)"/>
<rect x="2121.9" y="631.0" width="36.4" height="36.6" fill="#a6a6a6"/>
<polyline points="2174,642.8 2183.5,652.6 2193,642.8" fill="none" stroke="#666" stroke-width="1.3"/>
<rect x="2105.7" y="702.6" width="101" height="69" fill="#fff" stroke="#e4e4e4" stroke-width="2"/>
<rect x="2118.6" y="714.9" width="43" height="43.3" fill="rgb(228,232,214)"/>
<rect x="2121.9" y="718.5" width="36.4" height="36.6" fill="#8db600"/>
<polyline points="2174,730.3 2183.5,740.1 2193,730.3" fill="none" stroke="#666" stroke-width="1.3"/>
<rect x="2105.7" y="788.3" width="101" height="69" fill="#fff" stroke="#e4e4e4" stroke-width="2"/>
<rect x="2118.6" y="800.6" width="43" height="43.3" fill="rgb(239,214,214)"/>
<rect x="2121.9" y="804.2" width="36.4" height="36.6" fill="#ff0000"/>
<polyline points="2174,816.0 2183.5,825.8 2193,816.0" fill="none" stroke="#666" stroke-width="1.3"/>
<rect x="2105.7" y="875.8" width="101" height="69" fill="#fff" stroke="#e4e4e4" stroke-width="2"/>
<rect x="2118.6" y="888.1" width="43" height="43.3" fill="rgb(237,238,235)"/>
<rect x="2121.9" y="891.7" width="36.4" height="36.6" fill="#e8f0d0"/>
<polyline points="2174,903.5 2183.5,913.3 2193,903.5" fill="none" stroke="#666" stroke-width="1.3"/>
<rect x="2105.7" y="962.0" width="101" height="69" fill="#fff" stroke="#e4e4e4" stroke-width="2"/>
<rect x="2118.6" y="974.3" width="43" height="43.3" fill="rgb(239,234,235)"/>
<rect x="2121.9" y="977.9" width="36.4" height="36.6" fill="#ffcfd2"/>
<polyline points="2174,989.7 2183.5,999.5 2193,989.7" fill="none" stroke="#666" stroke-width="1.3"/>
<rect x="2105.7" y="1049.5" width="101" height="69" fill="#fff" stroke="#e4e4e4" stroke-width="2"/>
<rect x="2118.6" y="1061.8" width="43" height="43.3" fill="rgb(228,232,214)"/>
<rect x="2121.9" y="1065.4" width="36.4" height="36.6" fill="#8db600"/>
<polyline points="2174,1077.2 2183.5,1087.0 2193,1077.2" fill="none" stroke="#666" stroke-width="1.3"/>
<rect x="2105.7" y="1135.6" width="101" height="69" fill="#fff" stroke="#e4e4e4" stroke-width="2"/>
<rect x="2118.6" y="1147.9" width="43" height="43.3" fill="rgb(239,214,214)"/>
<rect x="2121.9" y="1151.5" width="36.4" height="36.6" fill="#ff0000"/>
<polyline points="2174,1163.3 2183.5,1173.1 2193,1163.3" fill="none" stroke="#666" stroke-width="1.3"/>
<rect x="2105.7" y="1223.6" width="101" height="69" fill="#fff" stroke="#e4e4e4" stroke-width="2"/>
</g>
<text transform="translate(1781.81,392.60) scale(0.9168,1)" font-family="Liberation Sans" font-size="43.31" font-weight="400" fill="#333333">Appearance</text>
<text transform="translate(1832.87,500.50) scale(0.9416,1)" font-family="Liberation Sans" font-size="24.85" font-weight="400" fill="#333333">Apply Default Theme</text>
<text transform="translate(1832.87,581.70) scale(0.9264,1)" font-family="Liberation Sans" font-size="25.29" font-weight="400" fill="#333333">Apply Gradient</text>
<text transform="translate(1788.09,656.70) scale(0.9280,1)" font-family="Liberation Sans" font-size="24.71" font-weight="400" fill="#333333" stroke="#333333" stroke-width="0.4">Axis Color</text>
<text transform="translate(1787.05,744.30) scale(0.9587,1)" font-family="Liberation Sans" font-size="24.27" font-weight="400" fill="#333333" stroke="#333333" stroke-width="0.4">Line Above</text>
<text transform="translate(1786.87,830.40) scale(0.9577,1)" font-family="Liberation Sans" font-size="24.13" font-weight="400" fill="#333333" stroke="#333333" stroke-width="0.4">Line Below</text>
<text transform="translate(1788.09,917.00) scale(0.9552,1)" font-family="Liberation Sans" font-size="24.13" font-weight="400" fill="#333333" stroke="#333333" stroke-width="0.4">Area Above</text>
<text transform="translate(1788.11,1003.60) scale(0.9190,1)" font-family="Liberation Sans" font-size="24.85" font-weight="400" fill="#333333" stroke="#333333" stroke-width="0.4">Area Below</text>
<text transform="translate(1786.88,1091.10) scale(0.9283,1)" font-family="Liberation Sans" font-size="24.85" font-weight="400" fill="#333333" stroke="#333333" stroke-width="0.4">Max</text>
<text transform="translate(1786.60,1177.30) scale(1.0093,1)" font-family="Liberation Sans" font-size="24.85" font-weight="400" fill="#333333" stroke="#333333" stroke-width="0.4">Min</text>
</svg>
</body></html>
